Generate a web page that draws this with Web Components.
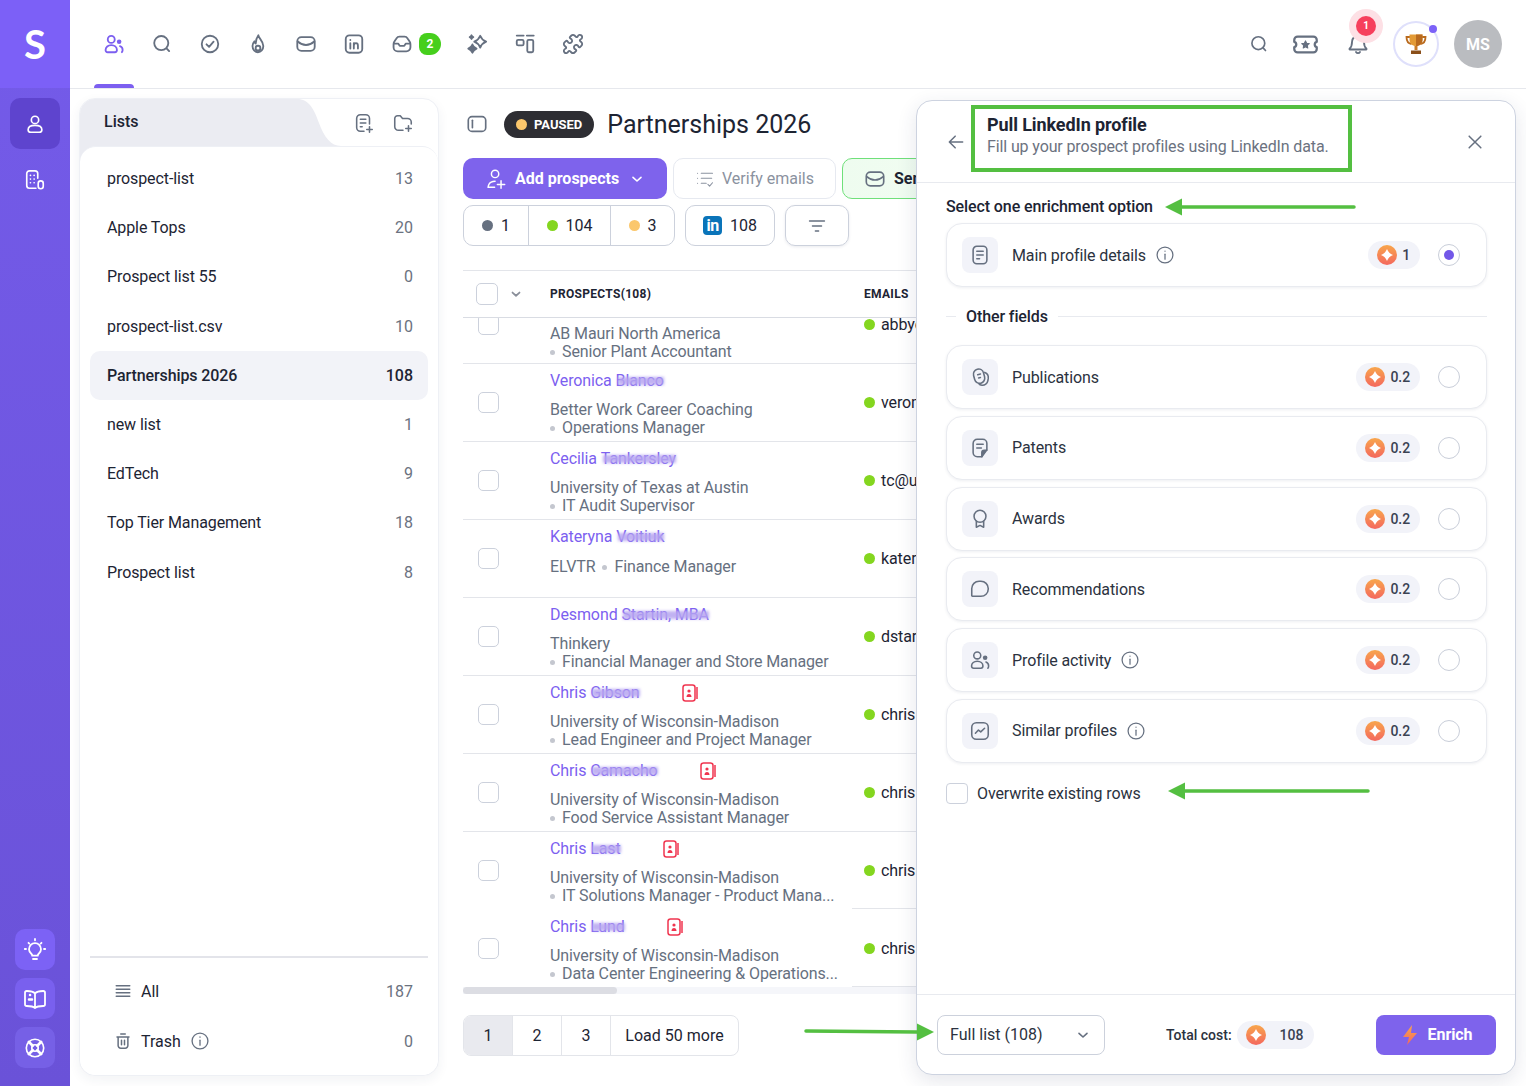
<!DOCTYPE html>
<html lang="en">
<head>
<meta charset="utf-8">
<title>Partnerships 2026</title>
<style>
  html, body { margin: 0; padding: 0; background: #fff; }
  body { font-family: Roboto, "Liberation Sans", sans-serif; color: #1d2433; }
</style>
</head>
<body>
<app-shell>
  <side-rail slot="rail"></side-rail>
  <top-nav slot="nav"></top-nav>
  <list-panel slot="lists">
    <list-item count="13">prospect-list</list-item>
    <list-item count="20">Apple Tops</list-item>
    <list-item count="0">Prospect list 55</list-item>
    <list-item count="10">prospect-list.csv</list-item>
    <list-item count="108" active>Partnerships 2026</list-item>
    <list-item count="1">new list</list-item>
    <list-item count="9">EdTech</list-item>
    <list-item count="18">Top Tier Management</list-item>
    <list-item count="8">Prospect list</list-item>
  </list-panel>
  <prospect-view slot="main">
    <prospect-row first company="AB Mauri North America" role="Senior Plant Accountant" email="abbye"></prospect-row>
    <prospect-row first-name="Veronica" smudge="Blanco" company="Better Work Career Coaching" role="Operations Manager" email="veron"></prospect-row>
    <prospect-row first-name="Cecilia" smudge="Tankersley" company="University of Texas at Austin" role="IT Audit Supervisor" email="tc@u"></prospect-row>
    <prospect-row first-name="Kateryna" smudge="Voitiuk" company="ELVTR" role="Finance Manager" inline email="kater"></prospect-row>
    <prospect-row first-name="Desmond" smudge="Startin, MBA" company="Thinkery" role="Financial Manager and Store Manager" email="dstar"></prospect-row>
    <prospect-row first-name="Chris" smudge="Gibson" badge company="University of Wisconsin-Madison" role="Lead Engineer and Project Manager" email="chris"></prospect-row>
    <prospect-row first-name="Chris" smudge="Camacho" badge company="University of Wisconsin-Madison" role="Food Service Assistant Manager" email="chris"></prospect-row>
    <prospect-row first-name="Chris" smudge="Last" badge faded company="University of Wisconsin-Madison" role="IT Solutions Manager - Product Mana..." email="chris"></prospect-row>
    <prospect-row first-name="Chris" smudge="Lund" badge faded company="University of Wisconsin-Madison" role="Data Center Engineering &amp; Operations..." email="chris"></prospect-row>
  </prospect-view>
  <enrich-panel slot="panel">
    <enrich-option icon="doc" cost="1" info selected>Main profile details</enrich-option>
    <enrich-option slot="other" icon="pub" cost="0.2">Publications</enrich-option>
    <enrich-option slot="other" icon="patent" cost="0.2">Patents</enrich-option>
    <enrich-option slot="other" icon="award" cost="0.2">Awards</enrich-option>
    <enrich-option slot="other" icon="chat" cost="0.2">Recommendations</enrich-option>
    <enrich-option slot="other" icon="users" cost="0.2" info>Profile activity</enrich-option>
    <enrich-option slot="other" icon="trend" cost="0.2" info>Similar profiles</enrich-option>
  </enrich-panel>
  <note-arrow slot="notes" x1="1354" y1="207" x2="1165" y2="207"></note-arrow>
  <note-arrow slot="notes" x1="1368" y1="791" x2="1168" y2="791"></note-arrow>
  <note-arrow slot="notes" x1="806" y1="1031" x2="934" y2="1032"></note-arrow>
</app-shell>

<script>
const star4 = (cx, cy, r) => {
  const k = r * 0.28;
  return `M${cx} ${cy - r}Q${cx + k} ${cy - k} ${cx + r} ${cy}Q${cx + k} ${cy + k} ${cx} ${cy + r}Q${cx - k} ${cy + k} ${cx - r} ${cy}Q${cx - k} ${cy - k} ${cx} ${cy - r}Z`;
};

// all line icons on a 24 box, drawn with currentColor
const ICONS = {
  users: '<circle cx="9" cy="7" r="3.8"/><path d="M2.8 18.6c0-3.2 2.700-5.300 6.200-5.300s6.200 2.100 6.200 5.300c0 1.500-.9 2.400-2.300 2.400H5.100c-1.400 0-2.300-.9-2.300-2.400z"/><circle cx="17.600" cy="9.600" r="2.500" fill="currentColor" stroke="none"/><path d="M18.500 14.300c1.800.6 2.900 2.200 2.900 4.200 0 1-.3 1.800-.8 2.400"/>',
  search: '<circle cx="11.200" cy="11" r="7.700"/><path d="M17.200 17l2.600 2.800"/>',
  check: '<circle cx="12" cy="12" r="9"/><path d="M8.200 12.300l2.800 2.800 4.900-5.600"/>',
  flame: '<path d="M12.400 2.500c.2 3.400 5.400 6 5.400 11.800a5.900 6.700 0 0 1-11.800 0c0-2.200.9-3.900 2.100-5.200.2 1.200.7 1.900 1.400 2.300.1-3.200.9-6.100 2.900-8.900z"/><circle cx="12" cy="16.500" r="2.600"/>',
  mail: '<rect x="2.500" y="4.500" width="19" height="15" rx="4.500"/><path d="M3 9.300c2.800 2.500 5.900 3.800 9 3.800s6.200-1.300 9-3.800"/>',
  linkedin: '<rect x="3" y="2.500" width="18" height="19" rx="4"/><path d="M8 11.200V17M8 7.500v.2M11.800 17v-5.800M11.800 14c0-1.800 1-2.900 2.400-2.900s2.100 1 2.100 2.800V17"/>',
  inbox: '<path d="M2.800 15.500v-3.200c0-1.100.3-2.100.9-3l2.200-3.300C6.700 4.700 7.800 4 9.200 4h5.600c1.400 0 2.500.7 3.300 2l2.200 3.300c.6.900.9 1.900.9 3v3.200a4.500 4.500 0 0 1-4.500 4.500H7.300a4.500 4.500 0 0 1-4.500-4.500z"/><path d="M3.200 11.500h4.600l1.700 2.500h5l1.700-2.500h4.600"/>',
  sparkles: `<path d="${star4(15.500, 9.500, 6.500)}"/><path d="${star4(7, 17, 4.500)}" fill="currentColor"/><path d="${star4(6, 4.500, 2)}" fill="currentColor"/>`,
  columns: '<path d="M3 2.800h7.500M14 2.800h7.500"/><rect x="3" y="7.500" width="7.500" height="6" rx="1.600"/><rect x="14.500" y="7.500" width="6.500" height="13.500" rx="1.600"/>',
  puzzle: '<path d="M19.439 7.850c-.049.322.059.648.289.878l1.568 1.568c.47.470.706 1.087.706 1.704s-.235 1.233-.706 1.704l-1.611 1.611a.98.98 0 0 1-.837.276c-.47-.07-.802-.48-.968-.925a2.501 2.501 0 1 0-3.214 3.214c.446.166.855.497.925.968a.979.979 0 0 1-.276.837l-1.610 1.610a2.404 2.404 0 0 1-1.705.707 2.402 2.402 0 0 1-1.704-.706l-1.568-1.568a1.026 1.026 0 0 0-.877-.29c-.493.074-.84.504-1.020.968a2.500 2.500 0 1 1-3.237-3.237c.464-.18.894-.527.967-1.020a1.026 1.026 0 0 0-.289-.877l-1.568-1.568A2.402 2.402 0 0 1 1.998 12c0-.617.236-1.234.706-1.704L4.230 8.770c.24-.24.581-.353.917-.303.515.077.877.528 1.073 1.010a2.500 2.500 0 1 0 3.259-3.259c-.482-.196-.933-.558-1.010-1.073-.05-.336.062-.676.303-.917l1.525-1.525A2.402 2.402 0 0 1 12 1.998c.617 0 1.234.236 1.704.706l1.568 1.568c.23.23.556.338.877.29.493-.074.84-.504 1.020-.968a2.500 2.500 0 1 1 3.237 3.237c-.464.18-.894.527-.967 1.020z"/>',
  ticket: `<path d="M5 5h14a3 3 0 0 1 3 3v1.600a2.500 2.500 0 0 0 0 4.800V16a3 3 0 0 1-3 3H5a3 3 0 0 1-3-3v-1.600a2.500 2.500 0 0 0 0-4.800V8a3 3 0 0 1 3-3z"/><path d="M12 8.800l1 2.100 2.300.3-1.700 1.600.4 2.300-2-1.100-2 1.100.4-2.300-1.700-1.600 2.300-.3z" fill="currentColor" stroke-width="1"/>`,
  bell: '<path d="M12 3a6.500 6.500 0 0 0-6.500 6.500c0 4.800-1.500 6.600-2.700 7.700-.3.300-.1.800.3.800h17.800c.4 0 .6-.5.300-.8-1.200-1.100-2.700-2.900-2.700-7.700A6.500 6.500 0 0 0 12 3z"/><path d="M9.800 20.800a2.600 2.600 0 0 0 4.400 0"/>',
  person: '<circle cx="12" cy="7.500" r="4"/><path d="M4.500 18.200c0-3 3.300-4.700 7.500-4.700s7.500 1.700 7.500 4.700c0 1.800-1.100 2.800-2.800 2.800H7.300c-1.700 0-2.800-1-2.800-2.800z"/>',
  building: '<path d="M13 21H6a3 3 0 0 1-3-3V5a3 3 0 0 1 3-3h6a3 3 0 0 1 3 3v5"/><path d="M7 7h.1M11 7h.1M7 11h.1M11 11h.1M7 15h.1M11 15h.1"/><rect x="15.500" y="13" width="5.500" height="8.500" rx="2.700"/>',
  doc: '<rect x="4.500" y="2.500" width="15" height="19" rx="4"/><path d="M8.500 8h7M8.500 12h7M8.500 16h3"/>',
  pub: '<path d="M9 3.500c3-.8 6 .8 6.800 3.800l1.200 4.500c.8 3-1 6.100-4 6.900s-6-.9-6.800-3.900L5 10.300C4.200 7.300 6 4.300 9 3.500z"/><path d="M17.200 7c2.500.9 4.200 3.300 3.800 6.500l-.4 2.500c-.5 3.200-3.500 5.400-6.500 5-1.500-.2-2.700-.8-3.500-1.900"/><path d="M9.500 9.500l3-.8M10.500 13l2-.5"/>',
  patent: '<path d="M19.500 14V7a4.500 4.500 0 0 0-4.500-4.500H9A4.500 4.500 0 0 0 4.500 7v10A4.500 4.500 0 0 0 9 21.500h5z"/><path d="M8.500 8h7M8.500 12h5"/><path d="M14 21.500V17a2.500 2.500 0 0 1 2.500-2.500h3" fill="currentColor"/>',
  award: '<circle cx="12" cy="9" r="6.500"/><path d="M8 14.500V21l4-2 4 2v-6.500"/>',
  chat: '<path d="M12 3.500h1a8 8 0 0 1 8 8v.5a8 8 0 0 1-8 8H4.500c-.8 0-1.500-.3-1.500-1V11.500a8 8 0 0 1 8-8z"/>',
  trend: '<rect x="3" y="3" width="18" height="18" rx="5"/><path d="M7 14.500l3.300-3.500 2.500 2L17 9"/>',
  info: '<circle cx="12" cy="12" r="9.500"/><path d="M12 11v6"/><path d="M12 7.200v.2"/>',
  addDoc: '<path d="M12 21H8a4 4 0 0 1-4-4V7a4 4 0 0 1 4-4h6a4 4 0 0 1 4 4v6"/><path d="M8 8h6M8 12h6M8 16h2M18 16v6M15 19h6"/>',
  addFolder: '<path d="M12 20H7a4 4 0 0 1-4-4V7a3 3 0 0 1 3-3h3l2.500 3H17a4 4 0 0 1 4 4v2"/><path d="M18 15v6M15 18h6"/>',
  panel: '<rect x="2.500" y="4" width="19" height="16" rx="4"/><path d="M7 8v8"/>',
  addUser: '<circle cx="11" cy="6.500" r="4"/><path d="M3.500 21c0-1 .2-2 .7-3 1-2 3.500-3.500 6.800-3.500"/><path d="M3.500 21h7M17.500 14v8M13.500 18h8"/>',
  chevron: '<path d="M6 9.500l6 5.500 6-5.500"/>',
  verify: '<path d="M3 5h.1M3 11h.1M3 17h.1M7.500 5H21M7.500 11H20M7.500 17h6M15.500 18.500l2 2 3.500-4"/>',
  filter: '<path d="M3 6h18M6.500 12h11M10 18h4"/>',
  rows: '<path d="M3 5h18M3 9.700h18M3 14.300h18M3 19h18"/>',
  trash: '<path d="M4 6.500h16M9 2.800h6M5.500 6.500V18a3.500 3.500 0 0 0 3.500 3.500h6a3.500 3.500 0 0 0 3.500-3.500V6.500M10 11v6M14 11v6"/>',
  bulb: '<path d="M8.500 16c-1.500-1.200-2.500-2.800-2.500-4.800a6 6 0 0 1 12 0c0 2-1 3.600-2.500 4.800-.5.500-.7 1-.7 1.700H9.200c0-.7-.2-1.200-.7-1.700z"/><path d="M10 21h4M12 1v1.300M3 11H1.800M22.200 11H21M5.500 4.800l.8.800M18.500 4.800l-.8.800"/>',
  book: '<path d="M12 6.500C10.500 4.700 8 4 3.800 4 2.800 4 2 4.800 2 5.800v11.400c0 1 .8 1.800 1.800 1.800 4 0 6.500.5 8.200 2 1.700-1.500 4.200-2 8.200-2 1 0 1.800-.8 1.800-1.800V5.800c0-1-.8-1.800-1.800-1.800-4.200 0-6.700.7-8.200 2.500zM12 6.500V21"/><path d="M7 8h.1M6 12.500h3" stroke-width="2.500"/>',
  lifebuoy: '<circle cx="12" cy="12" r="9.500"/><circle cx="12" cy="12" r="3.500"/><path d="M5.300 5.300l4.200 4.200M18.700 5.300l-4.200 4.200M5.300 18.700l4.200-4.200M18.700 18.700l-4.200-4.200" stroke-width="3"/>',
  back: '<path d="M20 12H4.500M11 5l-7 7 7 7"/>',
  close: '<path d="M5 5l14 14M19 5L5 19"/>'
};

class UiIcon extends HTMLElement {
  connectedCallback() {
    const size = this.getAttribute('size') || 24;
    const weight = this.getAttribute('weight') || 2;
    const root = this.shadowRoot || this.attachShadow({ mode: 'open' });
    root.innerHTML = `
      <style>
        :host { display: inline-flex; flex: none; width: ${size}px; height: ${size}px; color: inherit; }
        svg { width: 100%; height: 100%; display: block; fill: none; stroke: currentColor; stroke-linecap: round; stroke-linejoin: round; }
      </style>
      <svg viewBox="0 0 24 24" stroke-width="${weight}">${ICONS[this.getAttribute('name')] || ''}</svg>`;
  }
}

class CreditPill extends HTMLElement {
  constructor() {
    super();
    this.attachShadow({ mode: 'open' }).innerHTML = `
      <style>
        :host { display: inline-flex; align-items: center; height: 28px; padding: 0 10px 0 9px; gap: 5px; background: #f2f3f9; border-radius: 14px; font-size: 14px; font-weight: 500; color: #3a4252; }
        i { width: 20px; height: 20px; border-radius: 50%; background: linear-gradient(180deg, #f8a64c, #f4685e); display: flex; align-items: center; justify-content: center; }
        svg { width: 12px; height: 12px; fill: #fff; }
      </style>
      <i><svg viewBox="0 0 24 24"><path d="${star4(12, 12, 12)}"/></svg></i><span><slot></slot></span>`;
  }
}

class SideRail extends HTMLElement {
  constructor() {
    super();
    this.attachShadow({ mode: 'open' }).innerHTML = `
      <style>
        :host { display: flex; flex-direction: column; height: 100%; color: #fff; background: linear-gradient(180deg, #745be9, #6a52d8); }
        .logo { height: 88px; background: #7c60f7; display: flex; align-items: center; justify-content: center; font: 700 40px Lato, "Open Sans", sans-serif; }
        .tools { padding: 10px 10px 0; display: flex; flex-direction: column; gap: 6px; }
        .tool { height: 50px; display: flex; align-items: center; justify-content: center; border-radius: 10px; }
        .tool.on { background: #5e44ce; height: 51px; }
        .help { margin-top: auto; padding: 0 15px 18px; display: flex; flex-direction: column; gap: 8px; }
        .help div { height: 41px; border-radius: 10px; background: #7c62f5; display: flex; align-items: center; justify-content: center; }
        .help div:nth-child(2) { background: #7960ee; }
        .help div:nth-child(3) { background: #7660e6; }
      </style>
      <div class="logo">S</div>
      <div class="tools">
        <div class="tool on"><ui-icon name="person" size="22" weight="1.800"></ui-icon></div>
        <div class="tool"><ui-icon name="building" size="22" weight="1.800"></ui-icon></div>
      </div>
      <div class="help">
        <div><ui-icon name="bulb" size="24" weight="1.800"></ui-icon></div>
        <div><ui-icon name="book" size="24" weight="1.800"></ui-icon></div>
        <div><ui-icon name="lifebuoy" size="22" weight="1.800"></ui-icon></div>
      </div>`;
  }
}

class TopNav extends HTMLElement {
  constructor() {
    super();
    const left = ['users', 'search', 'check', 'flame', 'mail', 'linkedin', 'inbox', 'sparkles', 'columns', 'puzzle'];
    const items = left.map((name, i) => {
      if (name === 'inbox') return `<a class="item wide"><ui-icon name="inbox" size="22"></ui-icon><b>2</b></a>`;
      return `<a class="item${i === 0 ? ' on' : ''}"><ui-icon name="${name}" size="22"></ui-icon></a>`;
    }).join('');
    this.attachShadow({ mode: 'open' }).innerHTML = `
      <style>
        :host { display: flex; align-items: center; height: 88px; border-bottom: 1px solid #e6e8ed; padding: 0 24px 0 20px; color: #667080; background: #fff; }
        .left { display: flex; align-self: stretch; }
        .item { position: relative; width: 48px; display: flex; align-items: center; justify-content: center; }
        .item.wide { width: 75px; justify-content: flex-start; padding-left: 13px; box-sizing: border-box; gap: 6px; }
        .item.wide b { width: 22px; height: 22px; border-radius: 8px 11px 11px 8px; background: #46cf1c; color: #fff; font-size: 12px; font-weight: 700; display: flex; align-items: center; justify-content: center; }
        .item.on { color: #7c5ff0; }
        .item.on::after { content: ""; position: absolute; left: 4px; right: 4px; bottom: 0; height: 4px; border-radius: 4px 4px 0 0; background: #7c5ff0; }
        .right { margin-left: auto; display: flex; align-items: center; }
        .bell { position: relative; margin: 0 24px 0 28px; display: flex; }
        .bell i { position: absolute; left: 9px; top: -17px; width: 20px; height: 20px; border-radius: 50%; background: #f63f5c; box-shadow: 0 0 0 7px #fde0e5; color: #fff; font: 700 10px/20px Roboto, sans-serif; text-align: center; }
        .trophy { position: relative; width: 46px; height: 46px; box-sizing: border-box; border: 2px solid #dfe0fb; border-radius: 50%; display: flex; align-items: center; justify-content: center; }
        .trophy::after { content: ""; position: absolute; right: 0; top: 2px; width: 8px; height: 8px; border-radius: 50%; background: #7c62f8; }
        .avatar { width: 48px; height: 48px; margin-left: 15px; border-radius: 50%; background: #babcc0; color: #fff; font-size: 16px; font-weight: 700; display: flex; align-items: center; justify-content: center; }
      </style>
      <div class="left">${items}</div>
      <div class="right">
        <ui-icon name="search" size="20" style="margin-right:23px"></ui-icon>
        <ui-icon name="ticket" size="27"></ui-icon>
        <div class="bell"><ui-icon name="bell" size="22"></ui-icon><i>1</i></div>
        <div class="trophy">
          <svg width="24" height="24" viewBox="0 0 24 24">
            <path d="M6 5H2.500c0 4 1.500 6.500 5 7M18 5h3.500c0 4-1.500 6.500-5 7" fill="none" stroke="#b96a1e" stroke-width="1.800"/>
            <path d="M5.500 2.500h13v5c0 4-2.500 6.500-6.500 6.500S5.500 11.500 5.500 7.500z" fill="#e39a35"/>
            <path d="M12 2.500h6.500v5c0 4-2.500 6.500-6.500 6.500z" fill="#b96a1e"/>
            <path d="M10.500 14h3v4h-3z" fill="#c87a26"/>
            <path d="M7 18.500h10v3.500H7z" fill="#8a4f1a"/>
          </svg>
        </div>
        <div class="avatar">MS</div>
      </div>`;
  }
}

class ListItem extends HTMLElement {
  constructor() {
    super();
    this.attachShadow({ mode: 'open' });
  }
  connectedCallback() {
    this.shadowRoot.innerHTML = `
      <style>
        :host { display: flex; align-items: center; justify-content: space-between; height: 49.200px; padding: 0 15px 0 17px; box-sizing: border-box; font-size: 16px; color: #1d2433; border-radius: 10px; letter-spacing: -.1px; }
        :host([active]) { background: #f2f3f8; font-weight: 500; }
        span { color: #6b7280; letter-spacing: 0; }
        :host([active]) span { color: #1d2433; }
      </style>
      <slot></slot><span>${this.getAttribute('count')}</span>`;
  }
}

class ListPanel extends HTMLElement {
  constructor() {
    super();
    this.attachShadow({ mode: 'open' }).innerHTML = `
      <style>
        :host { display: flex; flex-direction: column; width: 360px; height: 978px; box-sizing: border-box; margin: 9px 0 0 9px; background: #fff; border: 1px solid #eef0f5; border-radius: 16px; box-shadow: 0 4px 12px rgba(40,50,90,.06); font-size: 16px; }
        header { display: flex; height: 47px; flex: none; border-radius: 16px 0 0 0; }
        .tab { width: 215px; height: 63px; flex: none; background: #ebecf2; border-radius: 15px 0 0 0; padding: 12px 0 0 24px; box-sizing: border-box; font-weight: 500; color: #1d2433; line-height: 22px; }
        .curve { flex: none; display: block; }
        .acts { margin-left: auto; padding: 13px 24px 0 0; display: flex; gap: 17px; color: #667080; }
        .inner { position: relative; flex: 1; display: flex; flex-direction: column; background: #fff; border-top: 1px solid #eef0f5; border-radius: 16px 16px 16px 16px; padding: 7px 10px 0; min-height: 0; }
        .foot { margin-top: auto; border-top: 2px solid #e3e4ea; padding: 8px 15px 9px 24px; }
        .foot div { display: flex; align-items: center; height: 50px; color: #1d2433; }
        .foot ui-icon { color: #667080; margin-right: 9px; }
        .foot span { margin-left: auto; color: #6b7280; }
        .foot ui-icon.inf { margin: 0 0 0 9px; }
      </style>
      <header>
        <div class="tab">Lists</div>
        <svg class="curve" width="46" height="47" viewBox="0 0 46 47"><path d="M0 0h2c12 0 17 10 22 24s12 23 22 23H0z" fill="#ebecf2"/></svg>
        <div class="acts"><ui-icon name="addDoc" size="22" weight="1.700"></ui-icon><ui-icon name="addFolder" size="22" weight="1.700"></ui-icon></div>
      </header>
      <div class="inner">
        <slot></slot>
        <div class="foot">
          <div><ui-icon name="rows" size="18"></ui-icon>All<span>187</span></div>
          <div><ui-icon name="trash" size="18"></ui-icon>Trash<ui-icon class="inf" name="info" size="20" weight="1.600"></ui-icon><span>0</span></div>
        </div>
      </div>`;
  }
}

class ProspectRow extends HTMLElement {
  constructor() {
    super();
    this.attachShadow({ mode: 'open' });
  }
  connectedCallback() {
    const a = n => this.getAttribute(n) || '';
    const badge = this.hasAttribute('badge') ? `
      <svg class="badge" width="16" height="18" viewBox="0 0 16 18" fill="none" stroke="#f0354f" stroke-width="1.500">
        <rect x="1" y="1" width="12" height="16" rx="2.500" fill="#fff"/><path d="M15 3v12"/>
        <circle cx="7" cy="7" r="1.600" fill="#f0354f" stroke="none"/><path d="M4.500 13c0-2 1-3 2.500-3s2.500 1 2.500 3z" fill="#f0354f" stroke="none"/>
      </svg>` : '';
    const name = this.hasAttribute('first') ? '' : `<div class="name">${a('first-name')} <span class="smudge">${a('smudge')}</span>${badge}</div>`;
    const sub = this.hasAttribute('inline')
      ? `<div class="line one">${a('company')}<i></i>${a('role')}</div>`
      : `<div class="line">${a('company')}</div><div class="line two"><i></i>${a('role')}</div>`;
    this.shadowRoot.innerHTML = `
      <style>
        :host { display: grid; grid-template-columns: 87px 314px 1fr; height: 78px; box-sizing: border-box; border-bottom: 1px solid #e3e5ea; font-size: 16px; letter-spacing: -.1px; }
        :host([first]) { margin-top: -32px; }
        :host([faded]) { border-bottom-color: transparent; background: linear-gradient(#e3e5ea, #e3e5ea) 389px 100% / 100% 1px no-repeat; }
        .box { align-self: center; margin-left: 15px; width: 21px; height: 21px; box-sizing: border-box; border: 1px solid #ccd1dc; border-radius: 5px; background: #fff; }
        .text { padding-top: 7px; color: #667080; white-space: nowrap; }
        :host([first]) .text { padding-top: 39px; }
        .name { color: #7c5ff0; height: 20px; line-height: 20px; margin-bottom: 10px; display: flex; align-items: center; white-space: pre; }
        .smudge { position: relative; }
        .smudge::after { content: ""; position: absolute; left: 2px; right: 0; top: 6px; bottom: 6px; background: rgba(182,165,240,.85); filter: blur(1.500px); }
        .badge { margin-left: 42px; flex: none; }
        .line { height: 18px; line-height: 18px; }
        .line.one { margin-top: 11px; }
        i { display: inline-block; width: 5px; height: 5px; border-radius: 50%; background: #c4c7cf; vertical-align: 2px; margin-right: 7px; }
        .one i { margin: 0 7px; }
        .mail { align-self: center; display: flex; align-items: center; gap: 6px; color: #1d2433; white-space: nowrap; }
        .mail i { width: 11px; height: 11px; background: #84d61f; margin: 0; vertical-align: 0; }
      </style>
      <div class="box"></div>
      <div class="text">${name}${sub}</div>
      <div class="mail"><i></i>${a('email')}</div>`;
  }
}

class ProspectView extends HTMLElement {
  constructor() {
    super();
    this.attachShadow({ mode: 'open' }).innerHTML = `
      <style>
        :host { display: flex; flex-direction: column; flex: 1; min-width: 0; height: 100%; margin-left: 24px; overflow: hidden; font-size: 16px; }
        .title { display: flex; align-items: center; height: 28px; margin-top: 21px; }
        .title ui-icon { color: #667080; margin-right: 16px; margin-left: 3px; }
        .paused { display: flex; align-items: center; gap: 7px; height: 27px; padding: 0 12px; border-radius: 14px; background: #2e2e33; color: #fff; font-size: 13px; font-weight: 700; }
        .paused i { width: 11px; height: 11px; border-radius: 50%; background: #fbc76c; }
        h1 { margin: 0 0 0 13px; font-size: 25px; font-weight: 400; color: #1d2433; }
        .acts { display: flex; gap: 6px; margin-top: 20px; width: 600px; }
        .btn { height: 41px; box-sizing: border-box; border-radius: 10px; display: flex; align-items: center; white-space: nowrap; flex: none; }
        .add { width: 204px; background: #7e63ec; color: #fff; font-weight: 700; padding-left: 22px; gap: 8px; }
        .verify { width: 163px; border: 1px solid #e6e9f0; color: #8b92a0; padding-left: 21px; gap: 7px; }
        .send { width: 200px; border: 1px solid #6fe07a; background: linear-gradient(90deg, #eefcef, #f5fdf5); color: #1d2433; font-weight: 700; padding-left: 21px; gap: 8px; }
        .send ui-icon { color: #667080; }
        .chips { display: flex; margin-top: 6px; gap: 10px; }
        .chipset { display: flex; height: 41px; box-sizing: border-box; border: 1px solid #ccd1dc; border-radius: 10px; align-items: center; color: #1d2433; }
        .chipset > div { display: flex; align-items: center; justify-content: center; gap: 8px; height: 100%; }
        .chipset > div + div { border-left: 1px solid #ccd1dc; }
        .chipset i { width: 11px; height: 11px; border-radius: 50%; }
        .li { width: 19px; height: 19px; border-radius: 4px; background: #0a74b9; color: #fff; font-weight: 700; font-size: 16px; line-height: 20px; text-align: center; letter-spacing: -.5px; }
        .thead { display: grid; grid-template-columns: 87px 314px 1fr; align-items: center; height: 48px; box-sizing: border-box; margin-top: 24px; width: 600px; border-top: 1px solid #e3e5ea; border-bottom: 1px solid #d9dce3; font-size: 12px; font-weight: 700; color: #1d2433; letter-spacing: .3px; flex: none; }
        .thead .c { display: flex; align-items: center; padding-left: 13px; gap: 11px; color: #8a8f9a; }
        .thead .c i { width: 22px; height: 22px; box-sizing: border-box; border: 1px solid #ccd1dc; border-radius: 5px; }
        .rows { height: 669px; width: 600px; overflow: hidden; flex: none; }
        .track { height: 7px; width: 453px; background: #f5f6fa; flex: none; }
        .track i { display: block; width: 154px; height: 100%; border-radius: 4px; background: #dcdde3; }
        .pager { display: flex; margin-top: 21px; width: 276px; height: 41px; border: 1px solid #e3e5ea; border-radius: 8px; overflow: hidden; box-sizing: border-box; flex: none; color: #1d2433; }
        .pager div { width: 48px; display: flex; align-items: center; justify-content: center; border-left: 1px solid #e3e5ea; }
        .pager div:first-child { background: #e9eaef; border-left: 0; }
        .pager div:last-child { flex: 1; }
      </style>
      <div class="title">
        <ui-icon name="panel" size="22" weight="1.800"></ui-icon>
        <div class="paused"><i></i>PAUSED</div>
        <h1>Partnerships 2026</h1>
      </div>
      <div class="acts">
        <div class="btn add"><ui-icon name="addUser" size="22" weight="1.600"></ui-icon>Add prospects<ui-icon name="chevron" size="16" weight="2.400" style="margin-left:2px"></ui-icon></div>
        <div class="btn verify"><ui-icon name="verify" size="20" weight="1.300"></ui-icon>Verify emails</div>
        <div class="btn send"><ui-icon name="mail" size="22" weight="1.800"></ui-icon>Send</div>
      </div>
      <div class="chips">
        <div class="chipset">
          <div style="width:64px"><i style="background:#667080"></i>1</div>
          <div style="width:81px"><i style="background:#84d61f"></i>104</div>
          <div style="width:63px"><i style="background:#fbc76c"></i>3</div>
        </div>
        <div class="chipset" style="width:90px"><div style="width:100%"><span class="li">in</span>108</div></div>
        <div class="chipset" style="width:64px;box-shadow:0 1px 3px rgba(40,50,90,.1)"><div style="width:100%;color:#667080"><ui-icon name="filter" size="20" weight="1.600"></ui-icon></div></div>
      </div>
      <div class="thead">
        <div class="c"><i></i><ui-icon name="chevron" size="14" weight="3"></ui-icon></div>
        <div>PROSPECTS(108)</div>
        <div>EMAILS</div>
      </div>
      <div class="rows"><slot></slot></div>
      <div class="track"><i></i></div>
      <div class="pager"><div>1</div><div>2</div><div>3</div><div>Load 50 more</div></div>`;
  }
}

class EnrichOption extends HTMLElement {
  constructor() {
    super();
    this.attachShadow({ mode: 'open' });
  }
  connectedCallback() {
    const info = this.hasAttribute('info') ? '<ui-icon class="inf" name="info" size="20" weight="1.500"></ui-icon>' : '';
    this.shadowRoot.innerHTML = `
      <style>
        :host { display: flex; align-items: center; height: 64px; box-sizing: border-box; padding: 0 26px 0 15px; background: #fff; border: 1px solid #e9ebf0; border-radius: 16px; box-shadow: 0 1px 3px rgba(40,50,90,.08); font-size: 16px; color: #2b3240; letter-spacing: -.1px; }
        .tile { width: 36px; height: 36px; border-radius: 8px; background: #f2f3f9; display: flex; align-items: center; justify-content: center; color: #667080; margin-right: 14px; }
        .inf { color: #667080; margin-left: 9px; }
        credit-pill { margin-left: auto; margin-right: 18px; }
        .radio { width: 22px; height: 22px; box-sizing: border-box; border: 1px solid #c9ced9; border-radius: 50%; background: #fff; display: flex; align-items: center; justify-content: center; }
        :host([selected]) .radio::after { content: ""; width: 10px; height: 10px; border-radius: 50%; background: #7257e8; }
      </style>
      <div class="tile"><ui-icon name="${this.getAttribute('icon')}" size="22" weight="1.700"></ui-icon></div>
      <slot></slot>${info}
      <credit-pill>${this.getAttribute('cost')}</credit-pill>
      <div class="radio"></div>`;
  }
}

class EnrichPanel extends HTMLElement {
  constructor() {
    super();
    this.attachShadow({ mode: 'open' }).innerHTML = `
      <style>
        :host { position: absolute; left: 916px; top: 100px; width: 600px; height: 975px; box-sizing: border-box; display: flex; flex-direction: column; background: #fff; border: 1px solid #cdd3e0; border-radius: 16px; box-shadow: 0 6px 20px rgba(40,50,90,.12); font-size: 16px; color: #1d2433; z-index: 2; }
        header { flex: none; height: 82px; box-sizing: border-box; border-bottom: 1px solid #e8eaef; display: flex; align-items: center; color: #667080; padding: 0 29px 0 29px; }
        .box { width: 381px; height: 67px; box-sizing: border-box; border: 4px solid #54bf41; margin: -7px 0 0 5px; padding: 4px 0 0 12px; }
        .box b { display: block; font-size: 18px; font-weight: 700; line-height: 24px; color: #1d2433; letter-spacing: -.1px; }
        .box span { display: block; font-size: 16px; line-height: 20px; color: #6b7280; letter-spacing: -.12px; }
        .body { flex: 1; padding: 14px 28px 0 29px; min-height: 0; }
        .lab { font-weight: 500; line-height: 20px; height: 20px; margin-bottom: 6px; letter-spacing: -.1px; }
        .sep { display: flex; align-items: center; height: 58px; font-weight: 500; gap: 10px; letter-spacing: -.1px; }
        .sep::before, .sep::after { content: ""; height: 1px; background: #e8eaef; }
        .sep::before { width: 10px; }
        .sep::after { flex: 1; }
        .others { display: flex; flex-direction: column; gap: 6.800px; }
        .over { display: flex; align-items: center; gap: 9px; margin-top: 20px; letter-spacing: -.1px; color: #2b3240; }
        .over i { width: 22px; height: 21px; box-sizing: border-box; border: 1px solid #ccd1dc; border-radius: 4px; }
        footer { flex: none; height: 80px; box-sizing: border-box; border-top: 1px solid #e8eaef; padding: 0 19px 0 20px; display: flex; align-items: center; }
        .select { width: 168px; height: 40px; box-sizing: border-box; border: 1px solid #ccd1dc; border-radius: 8px; padding: 0 13px 0 12px; display: flex; align-items: center; justify-content: space-between; color: #2b3240; }
        .select ui-icon { color: #667080; }
        .total { margin-left: 61px; font-size: 14px; font-weight: 500; color: #2b3240; margin-right: 5px; }
        credit-pill { gap: 14px; padding-right: 11px; }
        .enrich { margin-left: auto; width: 120px; height: 40px; border-radius: 8px; background: #7e63ec; color: #fff; font-weight: 700; display: flex; align-items: center; justify-content: center; gap: 8px; letter-spacing: -.1px; }
      </style>
      <header>
        <ui-icon name="back" size="20" weight="1.800"></ui-icon>
        <div class="box"><b>Pull LinkedIn profile</b><span>Fill up your prospect profiles using LinkedIn data.</span></div>
        <ui-icon name="close" size="20" weight="1.800" style="margin-left:auto;margin-right:1px"></ui-icon>
      </header>
      <div class="body">
        <div class="lab">Select one enrichment option</div>
        <slot></slot>
        <div class="sep">Other fields</div>
        <div class="others"><slot name="other"></slot></div>
        <div class="over"><i></i>Overwrite existing rows</div>
      </div>
      <footer>
        <div class="select">Full list (108)<ui-icon name="chevron" size="16" weight="2.400"></ui-icon></div>
        <div class="total">Total cost:</div>
        <credit-pill>108</credit-pill>
        <div class="enrich">
          <svg width="20" height="22" viewBox="0 0 20 22"><path d="M12 1L3 13h6l-2 8 10-12h-6z" fill="url(#bolt)"/><defs><linearGradient id="bolt" x1="0" y1="0" x2="0" y2="1"><stop offset="0" stop-color="#f8a64c"/><stop offset="1" stop-color="#f4685e"/></linearGradient></defs></svg>
          Enrich
        </div>
      </footer>`;
  }
}

// green annotation arrows sitting on top of the screenshot
class NoteArrow extends HTMLElement {
  constructor() {
    super();
    this.attachShadow({ mode: 'open' });
  }
  connectedCallback() {
    const [x1, y1, x2, y2] = ['x1', 'y1', 'x2', 'y2'].map(n => +this.getAttribute(n));
    const dir = Math.sign(x2 - x1);
    const neck = x2 - dir * 17;
    this.shadowRoot.innerHTML = `
      <style>
        :host { position: absolute; inset: 0; pointer-events: none; z-index: 3; }
        svg { display: block; width: 100%; height: 100%; }
      </style>
      <svg>
        <path d="M${x1} ${y1}L${neck} ${y2}" stroke="#54bf41" stroke-width="3.500" stroke-linecap="round"/>
        <path d="M${x2} ${y2}L${neck} ${y2 - 8.500}V${y2 + 8.500}Z" fill="#54bf41"/>
      </svg>`;
  }
}

class AppShell extends HTMLElement {
  constructor() {
    super();
    this.attachShadow({ mode: 'open' }).innerHTML = `
      <style>
        :host { display: grid; position: relative; grid-template-columns: 70px 1fr; grid-template-rows: 89px 1fr; width: 1526px; height: 1086px; overflow: hidden; }
        .rail { grid-row: 1 / 3; }
        .work { display: flex; min-height: 0; min-width: 0; }
      </style>
      <div class="rail"><slot name="rail"></slot></div>
      <div><slot name="nav"></slot></div>
      <div class="work"><slot name="lists"></slot><slot name="main"></slot></div>
      <slot name="panel"></slot>
      <slot name="notes"></slot>`;
  }
}

customElements.define('ui-icon', UiIcon);
customElements.define('credit-pill', CreditPill);
customElements.define('side-rail', SideRail);
customElements.define('top-nav', TopNav);
customElements.define('list-item', ListItem);
customElements.define('list-panel', ListPanel);
customElements.define('prospect-row', ProspectRow);
customElements.define('prospect-view', ProspectView);
customElements.define('enrich-option', EnrichOption);
customElements.define('enrich-panel', EnrichPanel);
customElements.define('note-arrow', NoteArrow);
customElements.define('app-shell', AppShell);
</script>
</body>
</html>
